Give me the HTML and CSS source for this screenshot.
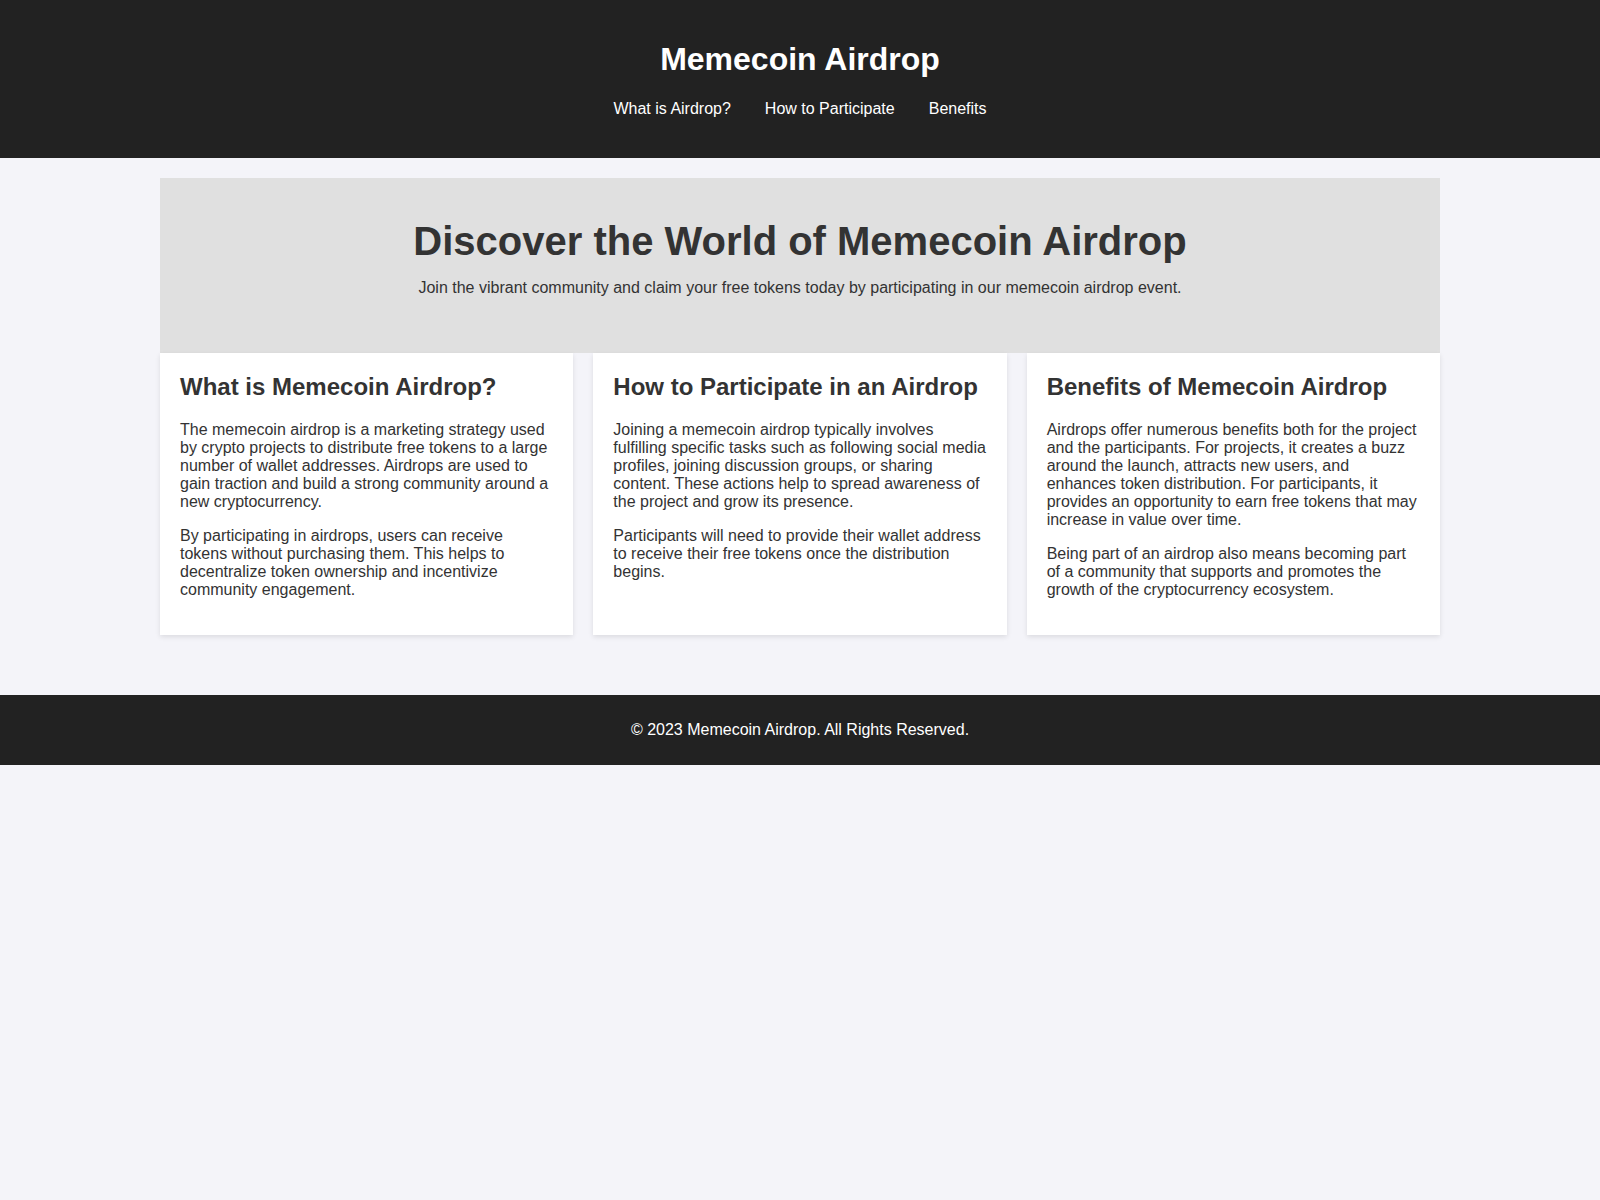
FILE: index.html
```html
<!DOCTYPE html>
<html lang="en">
<head>
<meta charset="UTF-8">
<title>Memecoin Airdrop</title>
<link rel="stylesheet" href="styles.css">
</head>
<body>
<header class="site-header">
  <h1 class="site-title">Memecoin Airdrop</h1>
  <nav class="site-nav">
    <a href="#what">What is Airdrop?</a>
    <a href="#how">How to Participate</a>
    <a href="#benefits">Benefits</a>
  </nav>
</header>
<main class="container">
  <section class="hero">
    <h1 class="hero-title">Discover the World of Memecoin Airdrop</h1>
    <p class="hero-text">Join the vibrant community and claim your free tokens today by participating in our memecoin airdrop event.</p>
  </section>
  <div class="cards">
    <section class="card" id="what">
      <h2>What is Memecoin Airdrop?</h2>
      <p>The memecoin airdrop is a marketing strategy used by crypto projects to distribute free tokens to a large number of wallet addresses. Airdrops are used to gain traction and build a strong community around a new cryptocurrency.</p>
      <p>By participating in airdrops, users can receive tokens without purchasing them. This helps to decentralize token ownership and incentivize community engagement.</p>
    </section>
    <section class="card" id="how">
      <h2>How to Participate in an Airdrop</h2>
      <p>Joining a memecoin airdrop typically involves fulfilling specific tasks such as following social media profiles, joining discussion groups, or sharing content. These actions help to spread awareness of the project and grow its presence.</p>
      <p>Participants will need to provide their wallet address to receive their free tokens once the distribution begins.</p>
    </section>
    <section class="card" id="benefits">
      <h2>Benefits of Memecoin Airdrop</h2>
      <p>Airdrops offer numerous benefits both for the project and the participants. For projects, it creates a buzz around the launch, attracts new users, and enhances token distribution. For participants, it provides an opportunity to earn free tokens that may increase in value over time.</p>
      <p>Being part of an airdrop also means becoming part of a community that supports and promotes the growth of the cryptocurrency ecosystem.</p>
    </section>
  </div>
</main>
<footer class="site-footer">
  <p>&copy; 2023 Memecoin Airdrop. All Rights Reserved.</p>
</footer>
</body>
</html>
```

FILE: styles.css
```css
html, body {
  margin: 0;
  padding: 0;
}

body {
  font-family: "Liberation Sans", Arial, Helvetica, sans-serif;
  font-size: 16px;
  background: #f4f4f9;
  color: #333333;
}

.site-header {
  background: #222222;
  color: #ffffff;
  text-align: center;
  padding: 41px 0 40px;
}

.site-title {
  font-size: 32px;
  font-weight: bold;
  margin: 0 0 22px;
}

.site-nav {
  display: flex;
  justify-content: center;
  gap: 34px;
}

.site-nav a {
  color: #ffffff;
  text-decoration: none;
}

.container {
  max-width: 1280px;
  margin: 20px auto 60px;
}

.hero {
  background: #e0e0e0;
  text-align: center;
  padding: 41px 20px 40px;
}

.hero-title {
  font-size: 40px;
  margin: 0;
}

.hero-text {
  margin: 15px 0 16px;
}

.cards {
  display: grid;
  grid-template-columns: repeat(3, 1fr);
  gap: 20px;
}

.card {
  background: #ffffff;
  padding: 20px;
  box-shadow: 0 2px 5px rgba(0, 0, 0, 0.1);
}

.card h2 {
  font-size: 24px;
  margin: 0 0 20px;
}

.card p {
  margin: 16px 0;
}

.site-footer {
  background: #222222;
  color: #ffffff;
  text-align: center;
  padding: 10px;
}

.site-footer p {
  margin: 16px 0;
}
```
